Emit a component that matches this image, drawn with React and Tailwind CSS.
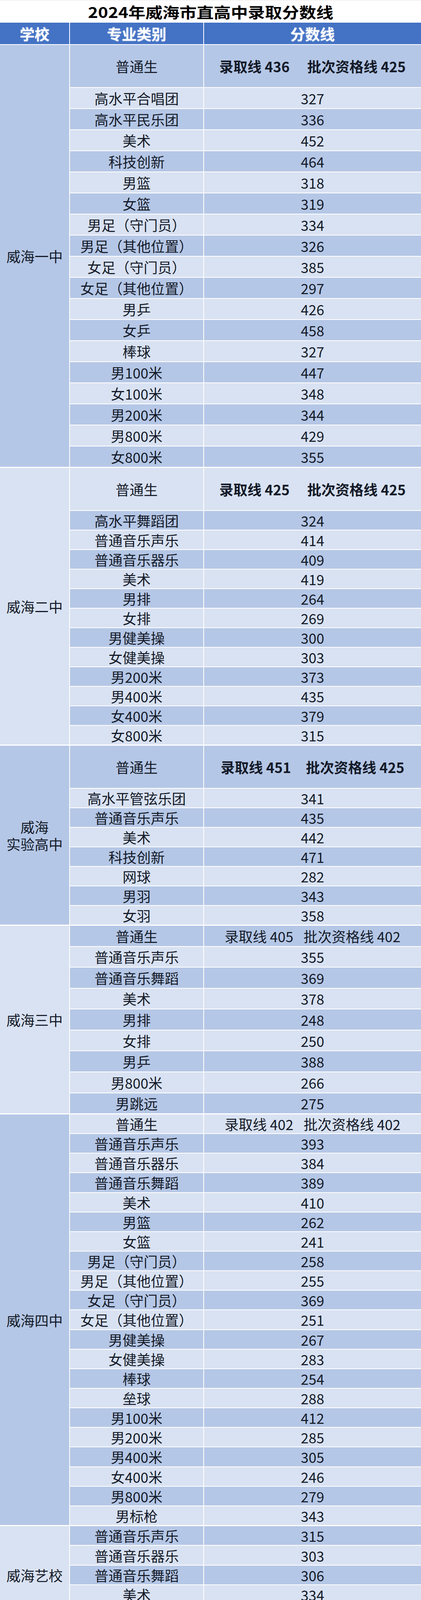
import React from 'react';

const DARK = 'bg-[#b5c7e6]';
const LIGHT = 'bg-[#d9e2f2]';

// group heights follow the reference; rows share the space inside each group
const GROUPS = [
  {
    school: ['威海一中'],
    h: 'h-[1080px]',
    firstFlex: 'flex-[2.08]',
    first: { cat: '普通生', a: '录取线 436', b: '批次资格线 425', bold: true, gap: 'gap-[45px]' },
    rows: [
      ['高水平合唱团', 327], ['高水平民乐团', 336], ['美术', 452], ['科技创新', 464],
      ['男篮', 318], ['女篮', 319], ['男足（守门员）', 334], ['男足（其他位置）', 326],
      ['女足（守门员）', 385], ['女足（其他位置）', 297], ['男乒', 426], ['女乒', 458],
      ['棒球', 327], ['男100米', 447], ['女100米', 348], ['男200米', 344],
      ['男800米', 429], ['女800米', 355],
    ],
  },
  {
    school: ['威海二中'],
    h: 'h-[708px]',
    firstFlex: 'flex-[2.25]',
    first: { cat: '普通生', a: '录取线 425', b: '批次资格线 425', bold: true, gap: 'gap-[45px]' },
    rows: [
      ['高水平舞蹈团', 324], ['普通音乐声乐', 414], ['普通音乐器乐', 409], ['美术', 419],
      ['男排', 264], ['女排', 269], ['男健美操', 300], ['女健美操', 303],
      ['男200米', 373], ['男400米', 435], ['女400米', 379], ['女800米', 315],
    ],
  },
  {
    school: ['威海', '实验高中'],
    h: 'h-[458px]',
    firstFlex: 'flex-[2.25]',
    first: { cat: '普通生', a: '录取线 451', b: '批次资格线 425', bold: true, gap: 'gap-[38px]' },
    rows: [
      ['高水平管弦乐团', 341], ['普通音乐声乐', 435], ['美术', 442], ['科技创新', 471],
      ['网球', 282], ['男羽', 343], ['女羽', 358],
    ],
  },
  {
    school: ['威海三中'],
    h: 'h-[480px]',
    firstFlex: 'flex-1',
    first: { cat: '普通生', a: '录取线 405', b: '批次资格线 402', bold: false, gap: 'gap-[26px]' },
    rows: [
      ['普通音乐声乐', 355], ['普通音乐舞蹈', 369], ['美术', 378], ['男排', 248],
      ['女排', 250], ['男乒', 388], ['男800米', 266], ['男跳远', 275],
    ],
  },
  {
    school: ['威海四中'],
    h: 'h-[1051px]',
    firstFlex: 'flex-1',
    first: { cat: '普通生', a: '录取线 402', b: '批次资格线 402', bold: false, gap: 'gap-[26px]' },
    rows: [
      ['普通音乐声乐', 393], ['普通音乐器乐', 384], ['普通音乐舞蹈', 389], ['美术', 410],
      ['男篮', 262], ['女篮', 241], ['男足（守门员）', 258], ['男足（其他位置）', 255],
      ['女足（守门员）', 369], ['女足（其他位置）', 251], ['男健美操', 267], ['女健美操', 283],
      ['棒球', 254], ['垒球', 288], ['男100米', 412], ['男200米', 285],
      ['男400米', 305], ['女400米', 246], ['男800米', 279], ['男标枪', 343],
    ],
  },
  {
    school: ['威海艺校'],
    h: 'h-[250px]',
    firstFlex: null,
    first: null,
    rows: [
      ['普通音乐声乐', 315], ['普通音乐器乐', 303], ['普通音乐舞蹈', 306], ['美术', 334],
      ['综合艺术', 306],
    ],
  },
];

function Row({ grow, bg, cat, children }) {
  return (
    <div className={`flex gap-[2px] min-h-0 ${grow}`}>
      <div className={`w-[341px] shrink-0 flex items-center justify-center ${bg}`}>{cat}</div>
      <div className={`flex-1 flex items-center justify-center ${bg}`}>{children}</div>
    </div>
  );
}

export default function App() {
  let idx = 0;
  return (
    <div
      className="w-[1077px] h-[4159px] bg-white text-[#141a28] flex flex-col"
      style={{ fontFamily: '"Noto Sans CJK SC", "Noto Sans", sans-serif' }}
    >
      {/* title */}
      <div className="h-[58px] shrink-0 flex items-center justify-center border-t border-[#e4e4e4]">
        <span className="inline-block scale-x-[1.15] text-[38px] font-bold leading-none text-black">
          2024年威海市直高中录取分数线
        </span>
      </div>

      {/* header */}
      <div className="h-[55px] shrink-0 flex gap-[2px] text-white text-[38px] font-bold leading-none">
        <div className="w-[177px] shrink-0 bg-[#4472c4] flex items-center justify-center [text-shadow:0_0_3px_#9fb6e0]">学校</div>
        <div className="w-[341px] shrink-0 bg-[#4472c4] flex items-center justify-center [text-shadow:0_0_3px_#9fb6e0]">专业类别</div>
        <div className="flex-1 bg-[#4472c4] flex items-center justify-center [text-shadow:0_0_3px_#9fb6e0]">分数线</div>
      </div>

      <div className="flex flex-col gap-[3px] pt-[2px] text-[36px] leading-none">
        {GROUPS.map((g, gi) => (
          <div key={gi} className={`flex gap-[2px] shrink-0 ${g.h}`}>
            <div
              className={`w-[177px] shrink-0 flex flex-col items-center justify-center gap-[8px] ${gi % 2 === 0 ? DARK : LIGHT}`}
            >
              {g.school.map(s => <span key={s}>{s}</span>)}
            </div>
            <div className="flex-1 flex flex-col gap-[2px]">
              {g.first && (() => {
                const bg = idx++ % 2 === 0 ? DARK : LIGHT;
                return (
                  <Row grow={g.firstFlex} bg={bg} cat={g.first.cat}>
                    <div className={`flex ${g.first.gap} ${g.first.bold ? 'font-bold' : ''}`}>
                      <span>{g.first.a}</span>
                      <span>{g.first.b}</span>
                    </div>
                  </Row>
                );
              })()}
              {g.rows.map(([cat, score]) => {
                const bg = idx++ % 2 === 0 ? DARK : LIGHT;
                return (
                  <Row key={cat} grow="flex-1" bg={bg} cat={cat}>
                    {score}
                  </Row>
                );
              })}
            </div>
          </div>
        ))}
      </div>
    </div>
  );
}
